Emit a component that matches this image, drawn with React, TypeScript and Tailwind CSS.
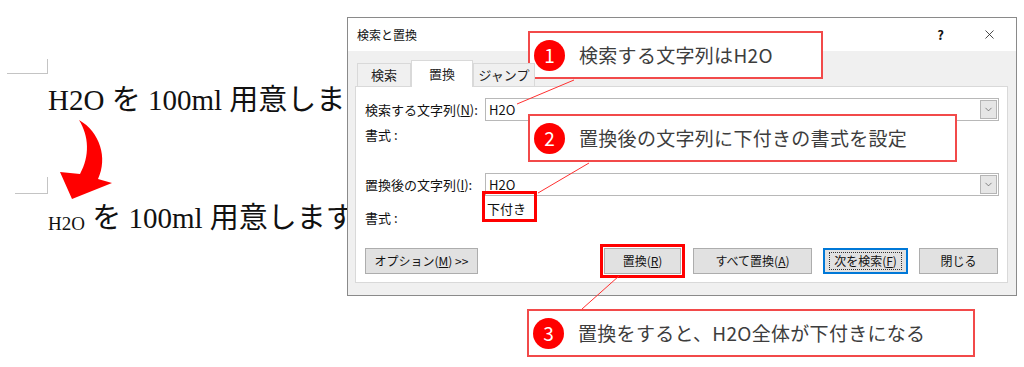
import { X, ChevronDown } from "lucide-react";

const jp = "font-['Noto_Sans_CJK_JP',sans-serif]";

function Combo({ value }: { value: string }) {
  return (
    <div className="flex h-[23px] flex-1 items-stretch border border-[#b8b8b8] bg-white">
      <div className="flex flex-1 items-center pl-[3px] text-[13px] text-[#111]">{value}</div>
      <div className="m-px flex w-[17px] items-center justify-center border border-[#b5b5b5] bg-[#e6e6e6]">
        <ChevronDown className="h-[11px] w-[11px] text-[#555]" strokeWidth={1.5} />
      </div>
    </div>
  );
}

function Button({
  children,
  width,
  primary,
}: {
  children: React.ReactNode;
  width: string;
  primary?: boolean;
}) {
  return (
    <button
      type="button"
      className={`flex h-[26px] items-center justify-center bg-[#e1e1e1] text-[12px] text-[#111] ${width} ${
        primary ? "border-2 border-[#0078d7]" : "border border-[#adadad]"
      }`}
    >
      {primary ? (
        <span className="border border-dotted border-[#333] px-[4px] leading-[16px]">{children}</span>
      ) : (
        children
      )}
    </button>
  );
}

function Callout({
  num,
  text,
  className,
}: {
  num: string;
  text: string;
  className: string;
}) {
  return (
    <div
      className={`absolute flex h-[48px] items-center border-2 border-[#f24a4a] bg-white pl-[4px] ${jp} ${className}`}
    >
      <div className="flex h-[31px] w-[31px] items-center justify-center rounded-full bg-[#ff0000] text-[19px] text-white">
        {num}
      </div>
      <span className="ml-[14px] text-[19px] tracking-[0.3px] text-[#3d3d3d]">{text}</span>
    </div>
  );
}

export default function App() {
  return (
    <div className="relative h-[367px] w-[1024px] overflow-hidden bg-white">
      {/* document */}
      <div className="pl-[48px] pt-[85px] font-['Liberation_Serif','Noto_Sans_CJK_JP',serif] text-[29px] text-[#111]">
        <div className="h-[30px] whitespace-nowrap leading-[30px]">H2O を 100ml 用意します。</div>
        <div className="mt-[88px] h-[30px] whitespace-nowrap leading-[30px]">
          <span className="relative top-[2px] text-[19px]">H2O</span> を 100ml 用意します。
        </div>
      </div>
      <div className="absolute left-[7px] top-[59px] h-[15px] w-[41px] border-b border-r border-[#c4c4c4]" />
      <div className="absolute left-[15px] top-[177px] h-[17px] w-[33px] border-b border-r border-[#c4c4c4]" />
      <svg className="absolute left-[50px] top-[110px]" width="70" height="100" viewBox="50 110 70 100">
        <path
          d="M79 120 C100 132 108 158 98 179 L112 183 L72 199 L60 172 L80 174 C90 156 89 136 79 120 Z"
          fill="#ff0000"
        />
      </svg>

      {/* dialog */}
      <div className={`absolute left-[347px] top-[17px] flex h-[279px] w-[670px] flex-col border border-[#8a8a8a] bg-[#f0f0f0] ${jp}`}>
        <div className="flex h-[33px] items-center bg-white pl-[9px] text-[12px] text-[#111]">
          <span>検索と置換</span>
          <span className="ml-auto text-[13px] font-bold">?</span>
          <X className="ml-[38px] mr-[19px] h-[15px] w-[15px] text-[#222]" strokeWidth={1.3} />
        </div>
        <div className="flex flex-1 flex-col pb-[12px] pl-[7px] pr-[8px] pt-[9px]">
          <div className="relative z-10 flex h-[26px] items-end pl-[2px] text-[13px] text-[#222]">
            <div className="flex h-[23px] w-[54px] items-center justify-center border border-b-0 border-[#d9d9d9] bg-[#f0f0f0]">
              検索
            </div>
            <div className="-mb-px flex h-[27px] w-[62px] items-center justify-center border border-b-0 border-[#d9d9d9] bg-white">
              置換
            </div>
            <div className="flex h-[23px] w-[62px] items-center justify-center border border-b-0 border-[#d9d9d9] bg-[#f0f0f0]">
              ジャンプ
            </div>
          </div>
          <div className="flex flex-1 flex-col border border-[#d9d9d9] bg-white pl-[9px] pr-[8px] text-[13px] text-[#111]">
            <div className="mt-[11px] flex items-center">
              <div className="w-[120px]">
                検索する文字列(<span className="underline">N</span>):
              </div>
              <Combo value="H2O" />
            </div>
            <div className="mt-[5px] leading-[18px]">書式 :</div>
            <div className="mt-[29px] flex items-center">
              <div className="w-[120px]">
                置換後の文字列(<span className="underline">I</span>):
              </div>
              <Combo value="H2O" />
            </div>
            <div className="mt-[4px] flex leading-[18px]">
              <div className="mt-[9px] w-[122px]">書式 :</div>
              <div>下付き</div>
            </div>
            <div className="mr-px mt-[17px] flex items-center">
              <Button width="w-[113px]">
                オプション(<span className="underline">M</span>) &gt;&gt;
              </Button>
              <div className="ml-auto mr-[8px] border-[3px] border-[#ff0000] p-px">
                <Button width="w-[77px]">
                  置換(<span className="underline">R</span>)
                </Button>
              </div>
              <Button width="w-[119px]">
                すべて置換(<span className="underline">A</span>)
              </Button>
              <div className="ml-[11px]">
                <Button width="w-[85px]" primary>
                  次を検索(<span className="underline">F</span>)
                </Button>
              </div>
              <div className="ml-[11px]">
                <Button width="w-[79px]">閉じる</Button>
              </div>
            </div>
          </div>
        </div>
      </div>

      {/* annotation boxes */}
      <div className="absolute left-[482px] top-[191px] h-[31px] w-[55px] border-[3px] border-[#ff0000]" />
      <svg className="pointer-events-none absolute left-0 top-0" width="1024" height="367">
        <line x1="574" y1="80" x2="517" y2="104" stroke="#ff3030" strokeWidth="1" />
        <line x1="589" y1="163" x2="538" y2="193" stroke="#ff3030" strokeWidth="1" />
        <line x1="619" y1="276" x2="582" y2="309" stroke="#ff3030" strokeWidth="1" />
      </svg>
      <Callout num="1" text="検索する文字列はH2O" className="left-[528px] top-[31px] w-[295px]" />
      <Callout num="2" text="置換後の文字列に下付きの書式を設定" className="left-[528px] top-[114px] w-[429px]" />
      <Callout num="3" text="置換をすると、H2O全体が下付きになる" className="left-[527px] top-[309px] w-[448px]" />
    </div>
  );
}
